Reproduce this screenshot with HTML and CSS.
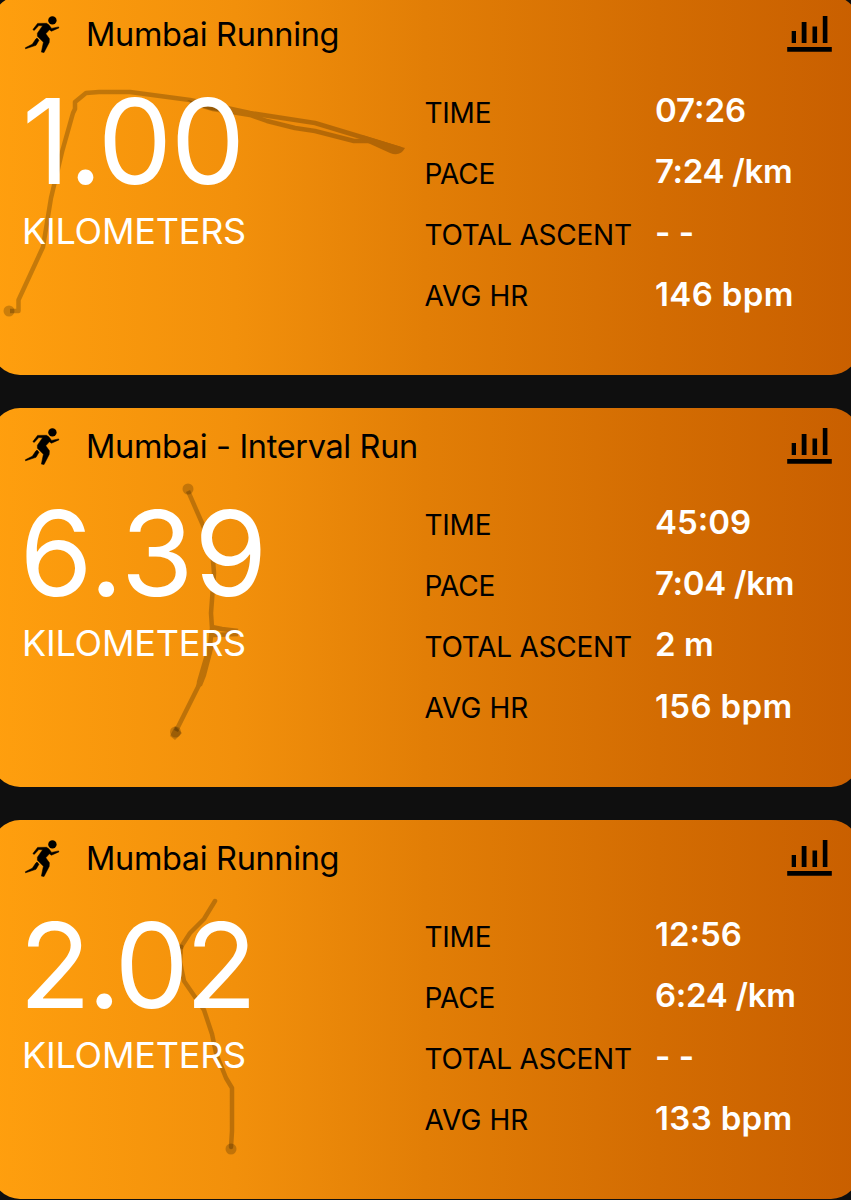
FILE: index.html
```html
<!DOCTYPE html>
<html lang="en">
<head>
<meta charset="utf-8">
<title>Activities</title>
<link rel="stylesheet" href="styles.css">
</head>
<body>
<svg class="defs" aria-hidden="true">
  <symbol id="runner" viewBox="0 0 38 40">
    <circle cx="29.4" cy="5.4" r="4.2"/>
    <path d="M9.900 14.6 14.6 8.4 23.500 8.300 25.8 9.800 28.6 13.4 35.600 11.900 35.9 12.9 28.4 16.2 26.4 14.8 22.8 18.8 26.4 23.8 26.2 27.4 21 37.6 18.4 37.1 20.4 27.2 14.4 21.2 14.4 18.200 19.600 10.700 15.800 10.600 11.200 15.4Z" stroke="#000" stroke-width=".5" stroke-linejoin="round"/>
    <path d="M14 23 16 25.2 13 30.3 2.600 33.800 2.300 32.800 9.300 29.2 12.800 24Z" stroke="#000" stroke-width=".5" stroke-linejoin="round"/>
  </symbol>
  <symbol id="chart" viewBox="0 0 45 36">
    <path d="M4.7 15h4.3v12H4.7zM14.7 6h4.8v21h-4.8zM25.5 10.5h4.6V27h-4.6zM35.8 0h4.6v27h-4.6zM.2 31h44.6v4.8H.2z"/>
  </symbol>
</svg>
<main class="feed">
  <article class="card">
    <svg class="route" viewBox="0 0 851 379">
      <g class="trace">
        <path d="M10 315H18.500V304L43 251 51 202 62 156 73 117 75 113V106L86 97 99 96H130L190 104 250 117 315 127 368 143 400 153"/>
        <path d="M190 106 213 113 250 119 267 125 295 132 315 135 354 145 370 145"/>
        <path class="wedge" d="M362 139 405 152Q400 161 390 157L368 147Z"/>
      </g>
      <path class="mark" d="M187 104 218 110V115Q200 113 187 104Z"/>
      <circle class="mark" cx="9" cy="315" r="5.500"/>
    </svg>
    <header class="head">
      <svg class="runner"><use href="#runner"/></svg>
      <h2 class="title">Mumbai Running</h2>
      <svg class="chart"><use href="#chart"/></svg>
    </header>
    <div class="body">
      <div class="distance"><div class="number">1.00</div><div class="unit">KILOMETERS</div></div>
      <dl class="metrics">
        <dt>TIME</dt><dd>07:26</dd>
        <dt>PACE</dt><dd class="pace">7:24 /km</dd>
        <dt>TOTAL ASCENT</dt><dd>- -</dd>
        <dt class="hr">AVG HR</dt><dd class="rate">146 bpm</dd>
      </dl>
    </div>
  </article>
  <article class="card">
    <svg class="route" viewBox="0 0 851 379">
      <g class="trace">
        <path d="M188 83 202 115 212 140 214 165 211 205 212 220 209 246 201 273 176 323"/>
        <path d="M212 219 222 221 238 223 M238 226 213 227"/>
        <path class="wedge" d="M208 234 204 249 197 273 196 280 202 278 206 268 211 249 214 237Z"/>
      </g>
      <circle class="mark" cx="188" cy="81" r="5.500"/>
      <circle class="mark" cx="175.500" cy="324" r="5.500"/>
      <path class="mark" d="M175 318 182 325 179 328 175 332 170 328Z"/>
    </svg>
    <header class="head">
      <svg class="runner"><use href="#runner"/></svg>
      <h2 class="title">Mumbai - Interval Run</h2>
      <svg class="chart"><use href="#chart"/></svg>
    </header>
    <div class="body">
      <div class="distance"><div class="number wide">6.39</div><div class="unit">KILOMETERS</div></div>
      <dl class="metrics">
        <dt>TIME</dt><dd>45:09</dd>
        <dt>PACE</dt><dd class="pace">7:04 /km</dd>
        <dt>TOTAL ASCENT</dt><dd>2 m</dd>
        <dt class="hr">AVG HR</dt><dd class="rate">156 bpm</dd>
      </dl>
    </div>
  </article>
  <article class="card">
    <svg class="route" viewBox="0 0 851 379">
      <g class="trace">
        <path stroke-linecap="round" d="M215 81 204 99 190 113 181 127 180 142 184 161 204 190 212 214 216 233 226 258 232 268V311L231 327"/>
      </g>
      <circle class="mark" cx="231" cy="329" r="5.500"/>
      <circle class="mark" cx="181" cy="127" r="2.500"/>
    </svg>
    <header class="head">
      <svg class="runner"><use href="#runner"/></svg>
      <h2 class="title">Mumbai Running</h2>
      <svg class="chart"><use href="#chart"/></svg>
    </header>
    <div class="body">
      <div class="distance"><div class="number tight">2.02</div><div class="unit">KILOMETERS</div></div>
      <dl class="metrics">
        <dt>TIME</dt><dd>12:56</dd>
        <dt>PACE</dt><dd class="pace">6:24 /km</dd>
        <dt>TOTAL ASCENT</dt><dd>- -</dd>
        <dt class="hr">AVG HR</dt><dd class="rate">133 bpm</dd>
      </dl>
    </div>
  </article>
</main>
</body>
</html>
```

FILE: styles.css
```css
* { box-sizing: border-box; }
body {
  margin: 0;
  height: 1200px;
  overflow: hidden;
  background: #0f0f0f;
  color: #000;
  font-family: Inter, "Liberation Sans", sans-serif;
}
.defs { display: none; }
.feed {
  display: flex;
  flex-direction: column;
  gap: 33px;
  margin: -4px -8px 0;
}
.card {
  position: relative;
  height: 379px;
  flex: none;
  padding: 0 8px;
  border-radius: 28px;
  background: linear-gradient(90deg, #ff9f0e 0%, #f2900b 28%, #e27e06 50%, #d36c02 77%, #c95f00 100%);
}
.route {
  position: absolute;
  left: 8px;
  top: 0;
  width: 851px;
  height: 379px;
}
.trace {
  opacity: .22;
  fill: none;
  stroke: #000;
  stroke-width: 4.500px;
  stroke-linejoin: round;
}
.trace .wedge { fill: #000; stroke: none; }
.mark { fill: rgba(0, 0, 0, .2); }
.head, .body { position: relative; }
.head {
  display: flex;
  align-items: center;
  height: 76px;
  padding: 0 19px 0 23px;
}
.runner { width: 38px; height: 40px; margin: 1px 25px 0 0; }
.chart { width: 45px; height: 36px; margin-left: auto; margin-bottom: 20px; align-self: flex-end; }
.title {
  margin: 2px 0 0;
  font-size: 32.500px;
  font-weight: 400;
  letter-spacing: -.35px;
  line-height: 76px;
}
.body { display: grid; grid-template-columns: 402.500px 1fr; padding-left: 22px; }
.distance { padding-top: 11px; color: #fff; }
.number { font-size: 118px; line-height: 116px; letter-spacing: -1.600px; }
.number.wide { margin-left: -2.500px; letter-spacing: .6px; }
.number.tight { margin-left: -3px; letter-spacing: -3.700px; }
.unit { font-size: 36px; line-height: 64px; letter-spacing: -.2px; }
.metrics {
  display: grid;
  grid-template-columns: 230.500px 1fr;
  grid-auto-rows: 61.200px;
  align-items: center;
  margin: 0;
  padding-top: 9px;
}
.metrics dt { padding-top: 2px; font-size: 28px; letter-spacing: -.25px; white-space: nowrap; }
.metrics dt.hr { letter-spacing: .1px; }
.metrics dd { margin: 0; padding-bottom: 3px; color: #fff; font-size: 33px; font-weight: 600; white-space: nowrap; }
.metrics dd.pace { letter-spacing: -.3px; }
.metrics dd.rate { letter-spacing: .35px; }
```
